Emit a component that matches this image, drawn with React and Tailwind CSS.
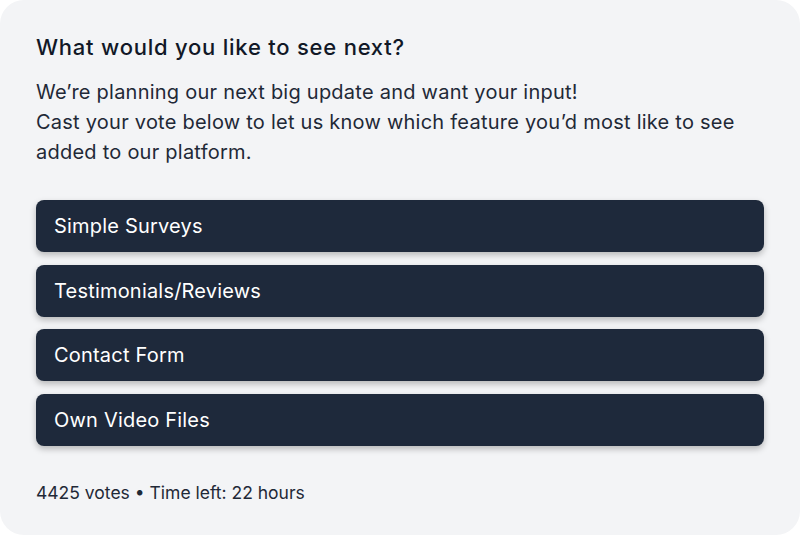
export default function App() {
  const options = ["Simple Surveys", "Testimonials/Reviews", "Contact Form", "Own Video Files"];

  return (
    <div className="w-[800px] h-[535px] bg-white" style={{ fontFamily: "Inter, 'Noto Sans', sans-serif" }}>
      <div className="h-full bg-[#f3f4f6] rounded-[24px] px-9 pt-[31px] text-[#1f2937]">
        {/* Heading */}
        <h2 className="text-[22px] leading-[32px] font-medium tracking-[0.035em] text-[#111827]">
          What would you like to see next?
        </h2>

        {/* Description */}
        <p className="mt-[14px] text-[20px] leading-[30px] tracking-[0.012em] text-[#1f2937]">
          We’re planning our next big update and want your input!
          <br />
          Cast your vote below to let us know which feature you’d most like to see added to our platform.
        </p>

        {/* Options */}
        <div className="mt-[33px] flex flex-col gap-[12.5px]">
          {options.map((o) => (
            <button
              key={o}
              className="h-[52px] w-full rounded-[8px] bg-[#1e293b] px-[18px] text-left text-[20px] tracking-[0.01em] text-white shadow-[0_3px_6px_rgba(0,0,0,0.25)]"
            >
              {o}
            </button>
          ))}
        </div>

        {/* Footer */}
        <p className="mt-[34px] text-[17.5px] text-[#1f2937]">
          4425 votes • Time left: 22 hours
        </p>
      </div>
    </div>
  );
}
